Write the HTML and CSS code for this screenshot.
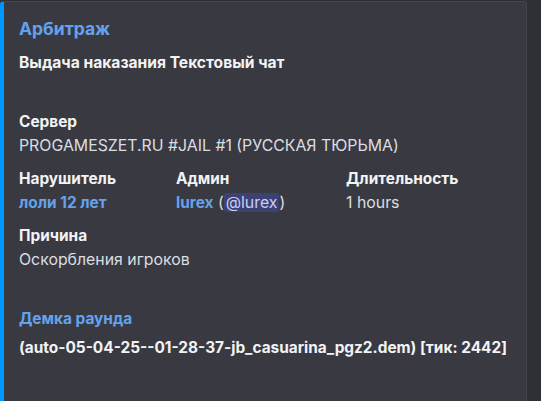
FILE: index.html
```html
<!DOCTYPE html>
<html lang="ru">
<head>
<meta charset="utf-8">
<link rel="stylesheet" href="styles.css">
</head>
<body>
<article class="embed">
  <div class="embed-title">Арбитраж</div>
  <div class="embed-desc"><strong>Выдача наказания Текстовый чат</strong></div>
  <div class="fields">
    <div class="field full">
      <div class="field-name">Сервер</div>
      <div class="field-value">PROGAMESZET.RU #JAIL #1 (РУССКАЯ ТЮРЬМА)</div>
    </div>
    <div class="field">
      <div class="field-name">Нарушитель</div>
      <div class="field-value"><span class="link">лоли 12 лет</span></div>
    </div>
    <div class="field">
      <div class="field-name">Админ</div>
      <div class="field-value"><span class="link">lurex</span> (<span class="mention">@lurex</span>)</div>
    </div>
    <div class="field">
      <div class="field-name">Длительность</div>
      <div class="field-value">1 hours</div>
    </div>
    <div class="field full">
      <div class="field-name">Причина</div>
      <div class="field-value">Оскорбления игроков</div>
    </div>
    <div class="field full demo">
      <div class="field-name link">Демка раунда</div>
      <div class="field-value"><strong>(auto-05-04-25--01-28-37-jb_casuarina_pgz2.dem) [тик: 2442]</strong></div>
    </div>
  </div>
</article>
</body>
</html>
```
FILE: styles.css
```css
html, body {
  margin: 0;
  padding: 0;
  background: #2f3035;
  height: 100%;
  overflow: hidden;
}
body {
  font-family: Inter, "Noto Sans", sans-serif;
  padding-top: 1px;
}
.embed {
  width: 527px;
  min-height: 420px;
  box-sizing: border-box;
  background: #393a41;
  border: 1px solid #45464d;
  border-left: 4px solid #0096ff;
  border-radius: 4px;
  padding: 17px 16px 16px 15px;
}
.embed-title {
  font-size: 17.5px;
  line-height: 20px;
  font-weight: 700;
  color: #64a2f0;
}
.embed-desc {
  margin-top: 14px;
  font-size: 15.6px;
  line-height: 20px;
  color: #f2f3f5;
}
.embed-desc strong { font-weight: 700; }
.fields {
  margin-top: 39px;
  display: grid;
  grid-template-columns: 157px 170px auto;
  row-gap: 13px;
}
.field.full { grid-column: 1 / -1; }
.field.demo { margin-top: 26px; }
.field-name {
  font-size: 15.4px;
  line-height: 20px;
  font-weight: 700;
  color: #f2f3f5;
  margin-bottom: 4px;
}
.demo .field-name { margin-bottom: 9px; }
.field-value {
  font-size: 15.85px;
  line-height: 20px;
  color: #dbdee1;
  white-space: nowrap;
}
.field-value strong { font-weight: 700; color: #f2f3f5; font-size: 15.4px; }
.link {
  color: #64a2f0;
  font-weight: 700;
  font-size: 15.4px;
}
.field-name.link { color: #64a2f0; }
.mention {
  background: #3d4273;
  color: #c9cdfb;
  border-radius: 3px;
  padding: 0 2px;
}
```
